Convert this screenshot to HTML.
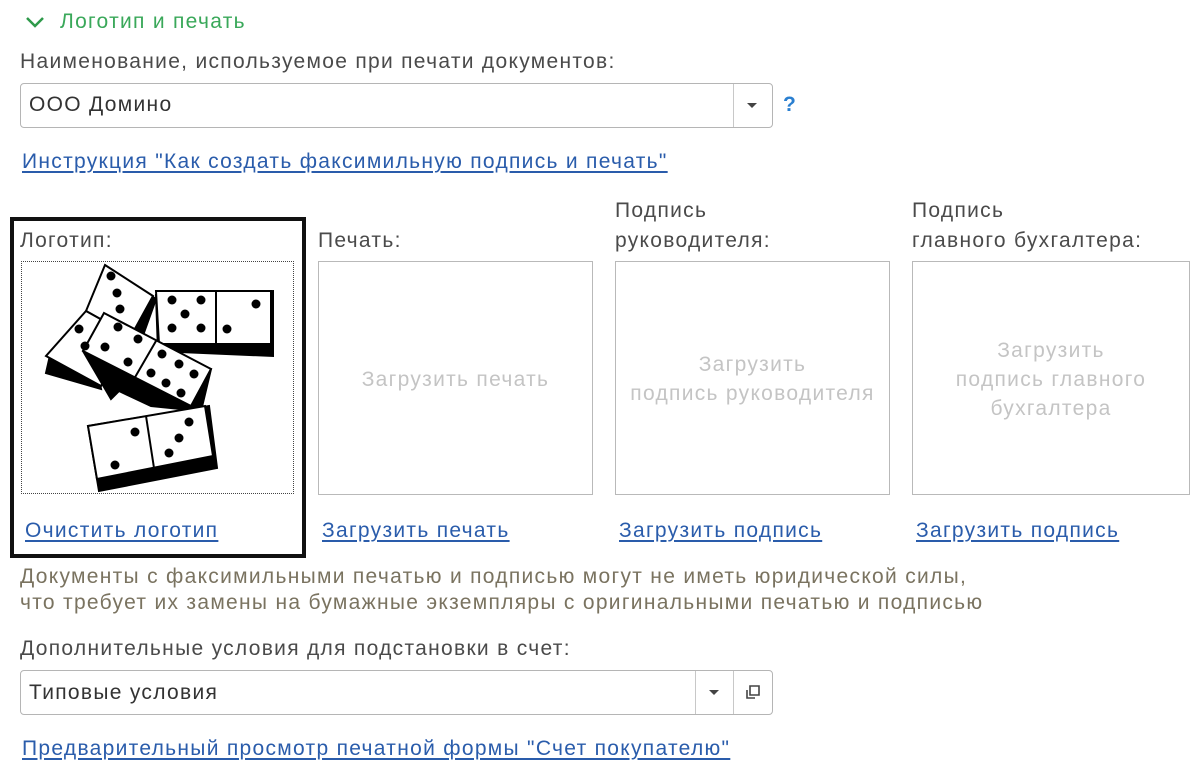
<!DOCTYPE html>
<html><head><meta charset="utf-8"><style>
body{margin:0;width:1200px;height:772px;background:#fff;font-family:"Liberation Sans",Arial,sans-serif;font-size:21px;letter-spacing:1.3px;color:#4a4a4a;position:relative;overflow:hidden}
.a{position:absolute;white-space:nowrap;line-height:24px}
.lnk{color:#2a5cab;text-decoration:underline;text-underline-offset:3px}
.box{position:absolute;border:1px solid #b9b9b9;background:#fff}
.ph{position:absolute;color:#c4c4c4;text-align:center;line-height:29px;width:100%}
.inp{position:absolute;border:1px solid #b5b5b5;border-radius:4px;background:#fff}
</style></head><body>
<svg class="a" style="left:24px;top:14px" width="22" height="16"><path d="M3 4 L11 12 L19 4" stroke="#2e9a4a" stroke-width="2.5" fill="none"/></svg>
<div class="a" style="left:60px;top:10px;color:#3aa85a">Логотип и печать</div>
<div class="a" style="left:20px;top:50px">Наименование, используемое при печати документов:</div>
<div class="inp" style="left:20px;top:83px;width:751px;height:43px">
<div class="a" style="left:8px;top:9px;color:#333">ООО Домино</div>
<div style="position:absolute;left:712px;top:0;width:1px;height:43px;background:#c8c8c8"></div>
<div style="position:absolute;left:726px;top:19px;border-left:5px solid transparent;border-right:5px solid transparent;border-top:5px solid #444"></div>
</div>
<div class="a" style="left:783px;top:93px;color:#2a7fd0;font-weight:bold">?</div>
<div class="a lnk" style="left:22px;top:150px">Инструкция "Как создать факсимильную подпись и печать"</div>

<div style="position:absolute;left:10px;top:217px;width:288px;height:333px;border:4px solid #111"></div>
<div class="a" style="left:20px;top:229px">Логотип:</div>
<div style="position:absolute;left:21px;top:261px;width:271px;height:231px;border:1px dotted #444;background:#fff">
<svg width="271" height="231" viewBox="21 261 271 231">
<g stroke="#000" stroke-width="2" fill="#fff">
<polygon points="105,265 155,298 140,340 50,350 45,372 100,388 90,340" fill="#000"/>
<polygon points="104,264 152,295 130,335 85,310"/>
<polygon points="85,310 130,335 100,385 45,355 "/>
<polygon points="155,294 272,290 272,355 157,350" fill="#000"/>
<polygon points="155,290 270,290 270,343 158,343"/>
<line x1="215" y1="290" x2="215" y2="343"/>
<polygon points="82,350 100,330 210,368 200,410 150,405 118,390 110,398" fill="#000"/>
<polygon points="103,312 210,368 190,405 82,350"/>
<line x1="155" y1="340" x2="133" y2="378"/>
<polygon points="87,425 208,405 216,467 98,490" fill="#000"/>
<polygon points="87,425 204,405 212,455 96,478"/>
<line x1="145" y1="415" x2="153" y2="467"/>
</g>
<g fill="#000">
<circle cx="110" cy="275" r="4.5"/><circle cx="116" cy="292" r="4.5"/><circle cx="119" cy="308" r="4.5"/>
<circle cx="78" cy="328" r="4.5"/><circle cx="84" cy="345" r="4.5"/>
<circle cx="171" cy="299" r="4.5"/><circle cx="200" cy="299" r="4.5"/><circle cx="184" cy="313" r="4.5"/><circle cx="171" cy="327" r="4.5"/><circle cx="200" cy="327" r="4.5"/>
<circle cx="255" cy="303" r="4.5"/><circle cx="226" cy="328" r="4.5"/>
<circle cx="117" cy="326" r="4.5"/><circle cx="137" cy="338" r="4.5"/><circle cx="104" cy="346" r="4.5"/><circle cx="127" cy="361" r="4.5"/>
<circle cx="161" cy="353" r="4.5"/><circle cx="178" cy="363" r="4.5"/><circle cx="193" cy="373" r="4.5"/><circle cx="150" cy="372" r="4.5"/><circle cx="165" cy="382" r="4.5"/><circle cx="180" cy="392" r="4.5"/>
<circle cx="134" cy="431" r="4.5"/><circle cx="114" cy="464" r="4.5"/>
<circle cx="188" cy="421" r="4.5"/><circle cx="178" cy="437" r="4.5"/><circle cx="168" cy="452" r="4.5"/>
</g></svg></div>
<div class="a lnk" style="left:25px;top:519px">Очистить логотип</div>

<div class="a" style="left:318px;top:229px">Печать:</div>
<div class="box" style="left:318px;top:261px;width:273px;height:232px"><div class="ph" style="top:103px">Загрузить печать</div></div>
<div class="a lnk" style="left:322px;top:519px">Загрузить печать</div>

<div class="a" style="left:615px;top:199px">Подпись</div>
<div class="a" style="left:615px;top:229px">руководителя:</div>
<div class="box" style="left:615px;top:261px;width:273px;height:232px"><div class="ph" style="top:88px">Загрузить<br>подпись руководителя</div></div>
<div class="a lnk" style="left:619px;top:519px">Загрузить подпись</div>

<div class="a" style="left:912px;top:199px">Подпись</div>
<div class="a" style="left:912px;top:229px">главного бухгалтера:</div>
<div class="box" style="left:912px;top:261px;width:276px;height:232px"><div class="ph" style="top:74px">Загрузить<br>подпись главного<br>бухгалтера</div></div>
<div class="a lnk" style="left:916px;top:519px">Загрузить подпись</div>

<div class="a" style="left:20px;top:565px;color:#7a7360">Документы с факсимильными печатью и подписью могут не иметь юридической силы,</div>
<div class="a" style="left:20px;top:591px;color:#7a7360">что требует их замены на бумажные экземпляры с оригинальными печатью и подписью</div>

<div class="a" style="left:20px;top:637px">Дополнительные условия для подстановки в счет:</div>
<div class="inp" style="left:20px;top:670px;width:751px;height:43px">
<div class="a" style="left:8px;top:10px;color:#333">Типовые условия</div>
<div style="position:absolute;left:674px;top:0;width:1px;height:43px;background:#c8c8c8"></div>
<div style="position:absolute;left:712px;top:0;width:1px;height:43px;background:#c8c8c8"></div>
<div style="position:absolute;left:688px;top:19px;border-left:5px solid transparent;border-right:5px solid transparent;border-top:5px solid #444"></div>
<svg style="position:absolute;left:724px;top:13px" width="16" height="16"><path d="M5 2h9v9H5z M2 6v8h8" stroke="#444" stroke-width="1.6" fill="none"/></svg>
</div>
<div class="a lnk" style="left:22px;top:737px">Предварительный просмотр печатной формы "Счет покупателю"</div>
</body></html>
